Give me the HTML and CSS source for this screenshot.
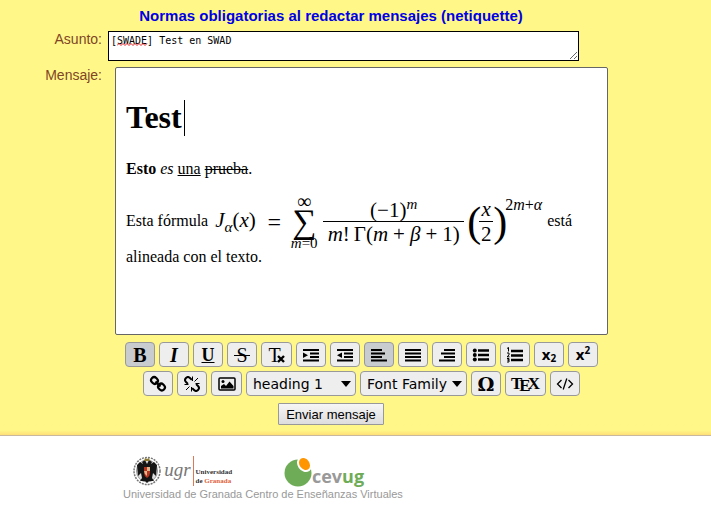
FILE: index.html
```html
<!DOCTYPE html>
<html lang="es">
<head>
<meta charset="utf-8">
<title>Enviar mensaje</title>
<link rel="stylesheet" href="styles.css">
</head>
<body>
<main class="panel">
  <a class="rules" href="#">Normas obligatorias al redactar mensajes (netiquette)</a>
  <form class="form">
    <div class="field">
      <label class="label" for="subject">Asunto:</label>
      <div class="subject-box">
        <textarea class="subject" id="subject" spellcheck="false">[SWADE] Test en SWAD</textarea>
        <svg class="squiggle" width="31" height="3" viewBox="0 0 31 3" aria-hidden="true"><path d="M0 2.5L2 .5L4 2.5L6 .5L8 2.5L10 .5L12 2.5L14 .5L16 2.5L18 .5L20 2.5L22 .5L24 2.5L26 .5L28 2.5L30 .5" fill="none" stroke="#e02020" stroke-width="1"/></svg>
      </div>
    </div>
    <div class="field">
      <span class="label" id="message-label">Mensaje:</span>
      <div class="message">
        <div class="editor" role="textbox" aria-multiline="true" aria-labelledby="message-label" contenteditable="true" spellcheck="false">
          <h1>Test<span class="caret"></span></h1>
          <p><b>Esto</b> <i>es</i> <u>una</u> <s>prueba</s>.</p>
          <p class="with-formula">Esta fórmula <span class="formula"><span class="lhs"><i>J</i><sub>α</sub>(<i>x</i>)</span><span class="eq">=</span><span class="sum"><span class="limit infinity">∞</span><span class="sigma">∑</span><span class="limit"><i>m</i>=0</span></span><span class="frac wide"><span class="num">(−1)<sup>m</sup></span><span class="den"><i>m</i>!<span class="gamma">Γ</span>(<i>m</i><span class="op">+</span><i>β</i><span class="op">+</span>1)</span></span><span class="paren">(</span><span class="frac small"><span class="num"><i>x</i></span><span class="den">2</span></span><span class="paren">)</span><span class="power">2<i>m</i>+<i>α</i></span></span> está alineada con el texto.</p>
        </div>
        <div class="toolbar">
          <div class="tools">
            <button type="button" class="tool on serif" aria-label="Bold"><b>B</b></button>
            <button type="button" class="tool serif" aria-label="Italic"><b><i>I</i></b></button>
            <button type="button" class="tool serif underline" aria-label="Underline">U</button>
            <button type="button" class="tool serif strike" aria-label="Strike">S</button>
            <button type="button" class="tool serif clear" aria-label="Remove format">T<svg width="8" height="8" viewBox="0 0 8 8"><path d="M1 1L7 7M7 1L1 7" stroke="#000" stroke-width="2.4"/></svg></button>
            <button type="button" class="tool" aria-label="Indent"><svg width="18" height="14" viewBox="0 0 18 14"><path d="M1 2H17M8 5.5H17M8 9H17M1 12.5H17" stroke="#000" stroke-width="2"/><path d="M1 4.5L6 7.3L1 10Z"/></svg></button>
            <button type="button" class="tool" aria-label="Outdent"><svg width="18" height="14" viewBox="0 0 18 14"><path d="M1 2H17M8 5.5H17M8 9H17M1 12.5H17" stroke="#000" stroke-width="2"/><path d="M6 4.5L1 7.3L6 10Z"/></svg></button>
            <button type="button" class="tool on" aria-label="Align left"><svg width="18" height="14" viewBox="0 0 18 14"><path d="M1 2H12M1 5.5H15M1 9H12M1 12.5H17" stroke="#000" stroke-width="2"/></svg></button>
            <button type="button" class="tool" aria-label="Justify"><svg width="18" height="14" viewBox="0 0 18 14"><path d="M1 2H17M1 5.5H17M1 9H17M1 12.5H17" stroke="#000" stroke-width="2"/></svg></button>
            <button type="button" class="tool" aria-label="Align right"><svg width="18" height="14" viewBox="0 0 18 14"><path d="M6 2H17M3 5.5H17M6 9H17M1 12.5H17" stroke="#000" stroke-width="2"/></svg></button>
            <button type="button" class="tool" aria-label="Bulleted list"><svg width="18" height="14" viewBox="0 0 18 14"><path d="M6 2.5H17M6 7H17M6 11.5H17" stroke="#000" stroke-width="2.5"/><circle cx="2.8" cy="2.5" r="2"/><circle cx="2.8" cy="7" r="2"/><circle cx="2.8" cy="11.5" r="2"/></svg></button>
            <button type="button" class="tool" aria-label="Numbered list"><svg width="18" height="16" viewBox="0 0 18 16"><path d="M5 4H17M5 8.5H17M5 13H17" stroke="#000" stroke-width="2.5"/><path d="M1 1.500L2.500 .5V4.500M1 6H3V8L1 9.800H3.500M1 11.500H3V13H1.500H3V15H1" fill="none" stroke="#000"/></svg></button>
            <button type="button" class="tool script" aria-label="Subscript">x<small class="low">2</small></button>
            <button type="button" class="tool script" aria-label="Superscript">x<small class="high">2</small></button>
          </div>
          <div class="tools">
            <button type="button" class="tool" aria-label="Link"><svg width="18" height="18" viewBox="0 0 18 18"><g fill="none" stroke="#000" stroke-width="2.200"><rect x="-3.500" y="-3" width="7" height="6" rx="3" transform="translate(5.500 5.500) rotate(45)"/><rect x="-3.500" y="-3" width="7" height="6" rx="3" transform="translate(12.500 12) rotate(45)"/><path d="M6.500 6.500L11.500 11.500"/></g></svg></button>
            <button type="button" class="tool" aria-label="Unlink"><svg width="16" height="16" viewBox="0 0 16 16"><g fill="none" stroke="#000" stroke-width="2" transform="rotate(45 8 8)"><path d="M5 5.200H2.300A2.800 2.800 0 0 0 2.300 10.800H5M11 5.200H13.700A2.800 2.800 0 0 1 13.700 10.800H11"/></g><path d="M8.500 5V.5M10.500 5.500L14 2M11.500 7.500H15.500M7.500 11V15.500M5.500 10.500L2 14M4.500 8.500H.5" stroke="#000"/></svg></button>
            <button type="button" class="tool wider" aria-label="Image"><svg width="18" height="14" viewBox="0 0 18 14"><rect x="1" y="1" width="16" height="12" rx="1" fill="none" stroke="#000" stroke-width="1.500"/><circle cx="5" cy="4.500" r="1.500"/><path d="M3 11.500V9L6 7L8 9L11.500 4.500L15.500 9V11.500Z"/></svg></button>
            <span class="picker heading"><select aria-label="Heading"><option>heading 1</option></select></span>
            <span class="picker family"><select aria-label="Font Family"><option>Font Family</option></select></span>
            <button type="button" class="tool omega" aria-label="Symbol">Ω</button>
            <button type="button" class="tool tex" aria-label="TeX">T<span>E</span>X</button>
            <button type="button" class="tool" aria-label="Source"><svg width="18" height="14" viewBox="0 0 18 14"><path d="M5.500 3L1.500 7L5.500 11M12.500 3L16.500 7L12.500 11M10.800 1.500L7.200 12.500" fill="none" stroke="#000" stroke-width="1.300"/></svg></button>
          </div>
        </div>
      </div>
    </div>
    <div class="actions"><button class="send" type="button">Enviar mensaje</button></div>
  </form>
</main>
<footer class="footer">
  <a class="partner" href="#">
    <span class="logo">
      <svg width="28" height="30" viewBox="0 0 28 30" aria-hidden="true"><ellipse cx="14" cy="15" rx="13" ry="13.500" fill="#fff" stroke="#777" stroke-width="1.500" stroke-dasharray="2 1"/><ellipse cx="14" cy="15" rx="10.500" ry="11" fill="#ddd" stroke="#999"/><path d="M14 8L12 4L9 6L10 8L7 6L4 9L5 20L8 17L9 22L7 25H12L14 27L16 25H21L19 22L20 17L23 20L24 9L21 6L18 8L19 6L16 4Z" fill="#151515"/><path d="M11 5L12 2L14 3L16 2L17 5Z" fill="#8d7a32"/><path d="M11 11H17V17Q17 20 14 22Q11 20 11 17Z" fill="#b8341e"/><path d="M14 11H17V15H14ZM11 15H14V20L12 18Z" fill="#ddb58b"/></svg>
      <i class="ugr-mark">ugr</i>
      <b class="ugr-name">Universidad<br>de <span>Granada</span></b>
    </span>
    <span>Universidad de Granada</span>
  </a>
  <a class="partner" href="#">
    <span class="logo">
      <svg width="28" height="32" viewBox="0 0 28 32" aria-hidden="true"><circle cx="14" cy="17" r="13.500" fill="#6fac57"/><ellipse cx="20.500" cy="8" rx="7" ry="8.500" transform="rotate(-35 20.500 8)" fill="#fff"/><ellipse cx="20.500" cy="8" rx="5" ry="6.500" transform="rotate(-35 20.500 8)" fill="#ff9500"/></svg>
      <b class="cevug-name">cev<span>ug</span></b>
    </span>
    <span>Centro de Enseñanzas Virtuales</span>
  </a>
</footer>
</body>
</html>
```
FILE: styles.css
```css
* { box-sizing: border-box; }

body {
  margin: 0;
  background: #fff;
  font-family: "Liberation Sans", Arial, sans-serif;
  font-size: 14px;
}

a { text-decoration: none; }
button, select, textarea { margin: 0; color: #000; }

.panel {
  padding: 7px 0 10px;
  border-bottom: 1px solid #c9b8a0;
  background: linear-gradient(to top, #ffdf78, #fff888 5px);
}

.rules {
  display: block;
  margin-right: 49px;
  text-align: center;
  font-size: 15px;
  font-weight: bold;
  line-height: 18px;
  color: #0000e6;
}

.form { padding-top: 6px; }

.field {
  display: grid;
  grid-template-columns: 102px minmax(0, 1fr);
  column-gap: 6px;
  margin: 0 103px 6px 0;
}

.label {
  text-align: right;
  font-size: 14px;
  line-height: 16px;
  color: #804526;
}

.subject-box { position: relative; margin-right: 29px; }

.subject {
  display: block;
  width: 100%;
  height: 30px;
  padding: 3px 2px;
  border: 1px solid #000;
  background: #fff;
  font: 10px/12px "DejaVu Sans Mono", monospace;
}

.squiggle { position: absolute; left: 9px; top: 12px; }

.message { margin-left: 7px; }

.editor {
  height: 268px;
  padding: 10px;
  overflow: hidden;
  border: 1px solid #666;
  border-radius: 2px;
  outline: none;
  background: #fff;
  font: 16px/18px "Liberation Serif", "Times New Roman", serif;
  color: #000;
}

.editor h1 { margin: 21px 0 24px; font-size: 32px; line-height: 36px; }
.editor p { margin: 0 0 18px; line-height: 18px; }

.caret {
  display: inline-block;
  width: 1px;
  height: 36px;
  margin-left: 2px;
  vertical-align: -8px;
  background: #000;
}

.formula {
  display: inline-flex;
  align-items: center;
  height: 52px;
  margin-left: 3px;
  vertical-align: middle;
  font-size: 21px;
  line-height: 22px;
  white-space: nowrap;
}

.formula sub, .formula sup { font-size: 15px; font-style: italic; line-height: 1; }
.lhs { width: 46px; }
.eq { width: 26px; text-align: center; font-size: 24px; }
.sum { display: flex; flex-direction: column; align-items: center; width: 34px; }
.limit { font-size: 15px; line-height: 12px; }
.limit.infinity { font-size: 20px; }
.sigma { font-size: 34px; line-height: 30px; }
.frac { display: flex; flex-direction: column; text-align: center; }
.frac.wide { width: 141px; margin: 0 3px 0 2px; }
.frac.small { width: 14px; }
.num { border-bottom: 1px solid #000; }
.num, .den { height: 25px; line-height: 25px; }
.gamma { margin-left: 4px; }
.op { margin: 0 5px; }
.paren { width: 12px; font-size: 42px; line-height: 42px; text-align: center; }
.power { align-self: flex-start; width: 38px; font-size: 16px; line-height: 18px; }

.toolbar { margin-top: 7px; }

.tools {
  display: flex;
  flex-wrap: wrap;
  justify-content: center;
  gap: 4px;
  margin-bottom: 4px;
}

.tool, .picker select {
  height: 25px;
  border: 1px solid #999;
  border-radius: 4px;
  background: #eee;
}

.tool {
  display: flex;
  align-items: center;
  justify-content: center;
  width: 30px;
  padding: 0;
}

.tool.on { background: #c8cccf; }
.tool.serif { font: 20px/20px "Liberation Serif", serif; }
.tool.underline { text-decoration: underline; font-weight: bold; font-size: 18px; }
.tool.strike { background: linear-gradient(#000, #000) center 12px / 16px 1px no-repeat, #eee; }
.tool.clear svg { align-self: flex-end; margin: 0 0 3px -4px; }
.tool.script { padding-bottom: 2px; font: bold 15px/20px "Open Sans", sans-serif; }
.tool small { font-size: 10px; line-height: 10px; }
.low { padding-top: 8px; }
.high { padding-bottom: 8px; }
.tool.wider, .tool.clear { width: 31px; }
.tool.omega { font: bold 19px "DejaVu Serif", serif; }
.tool.tex { width: 41px; font: bold 17px "Liberation Serif", serif; }
.tex span { margin: 5px -3px 0; }

.picker { position: relative; }
.picker select {
  width: 100%;
  padding: 0 6px;
  appearance: none;
  font: 14px "DejaVu Sans", sans-serif;
}
.picker::after {
  content: "";
  position: absolute;
  right: 5px;
  top: 10px;
  border: 5px solid transparent;
  border-top: 6px solid #000;
  border-bottom: 0;
  pointer-events: none;
}
.heading { width: 110px; }
.family { width: 107px; }

.actions { margin: -3px 49px 0 0; text-align: center; }

.send {
  display: block;
  margin: 0 auto;
  height: 22px;
  padding: 0 7px;
  border: 1px solid #999;
  border-radius: 1px;
  background: linear-gradient(#f6f6f6, #ddd);
  font: 13px "Liberation Sans", sans-serif;
}

.footer {
  display: flex;
  gap: 3px;
  padding: 20px 0 0 123px;
}

.partner {
  display: flex;
  flex-direction: column;
  align-items: center;
  font-size: 11px;
  line-height: 13px;
  color: #999;
}

.logo { display: flex; height: 32px; }
.ugr-mark { margin-left: 3px; font: italic 19px/28px "Liberation Serif", serif; color: #777; }
.ugr-name {
  height: 30px;
  margin-left: 2px;
  padding: 12px 0 0 2px;
  border-left: 1px solid #e07858;
  font: bold 7px/9px "Liberation Serif", serif;
  color: #333;
}
.ugr-name span { color: #e0603c; }
.cevug-name { font: bold 18px/40px "Open Sans", sans-serif; color: #999; }
.cevug-name span { color: #6fac57; }
```
